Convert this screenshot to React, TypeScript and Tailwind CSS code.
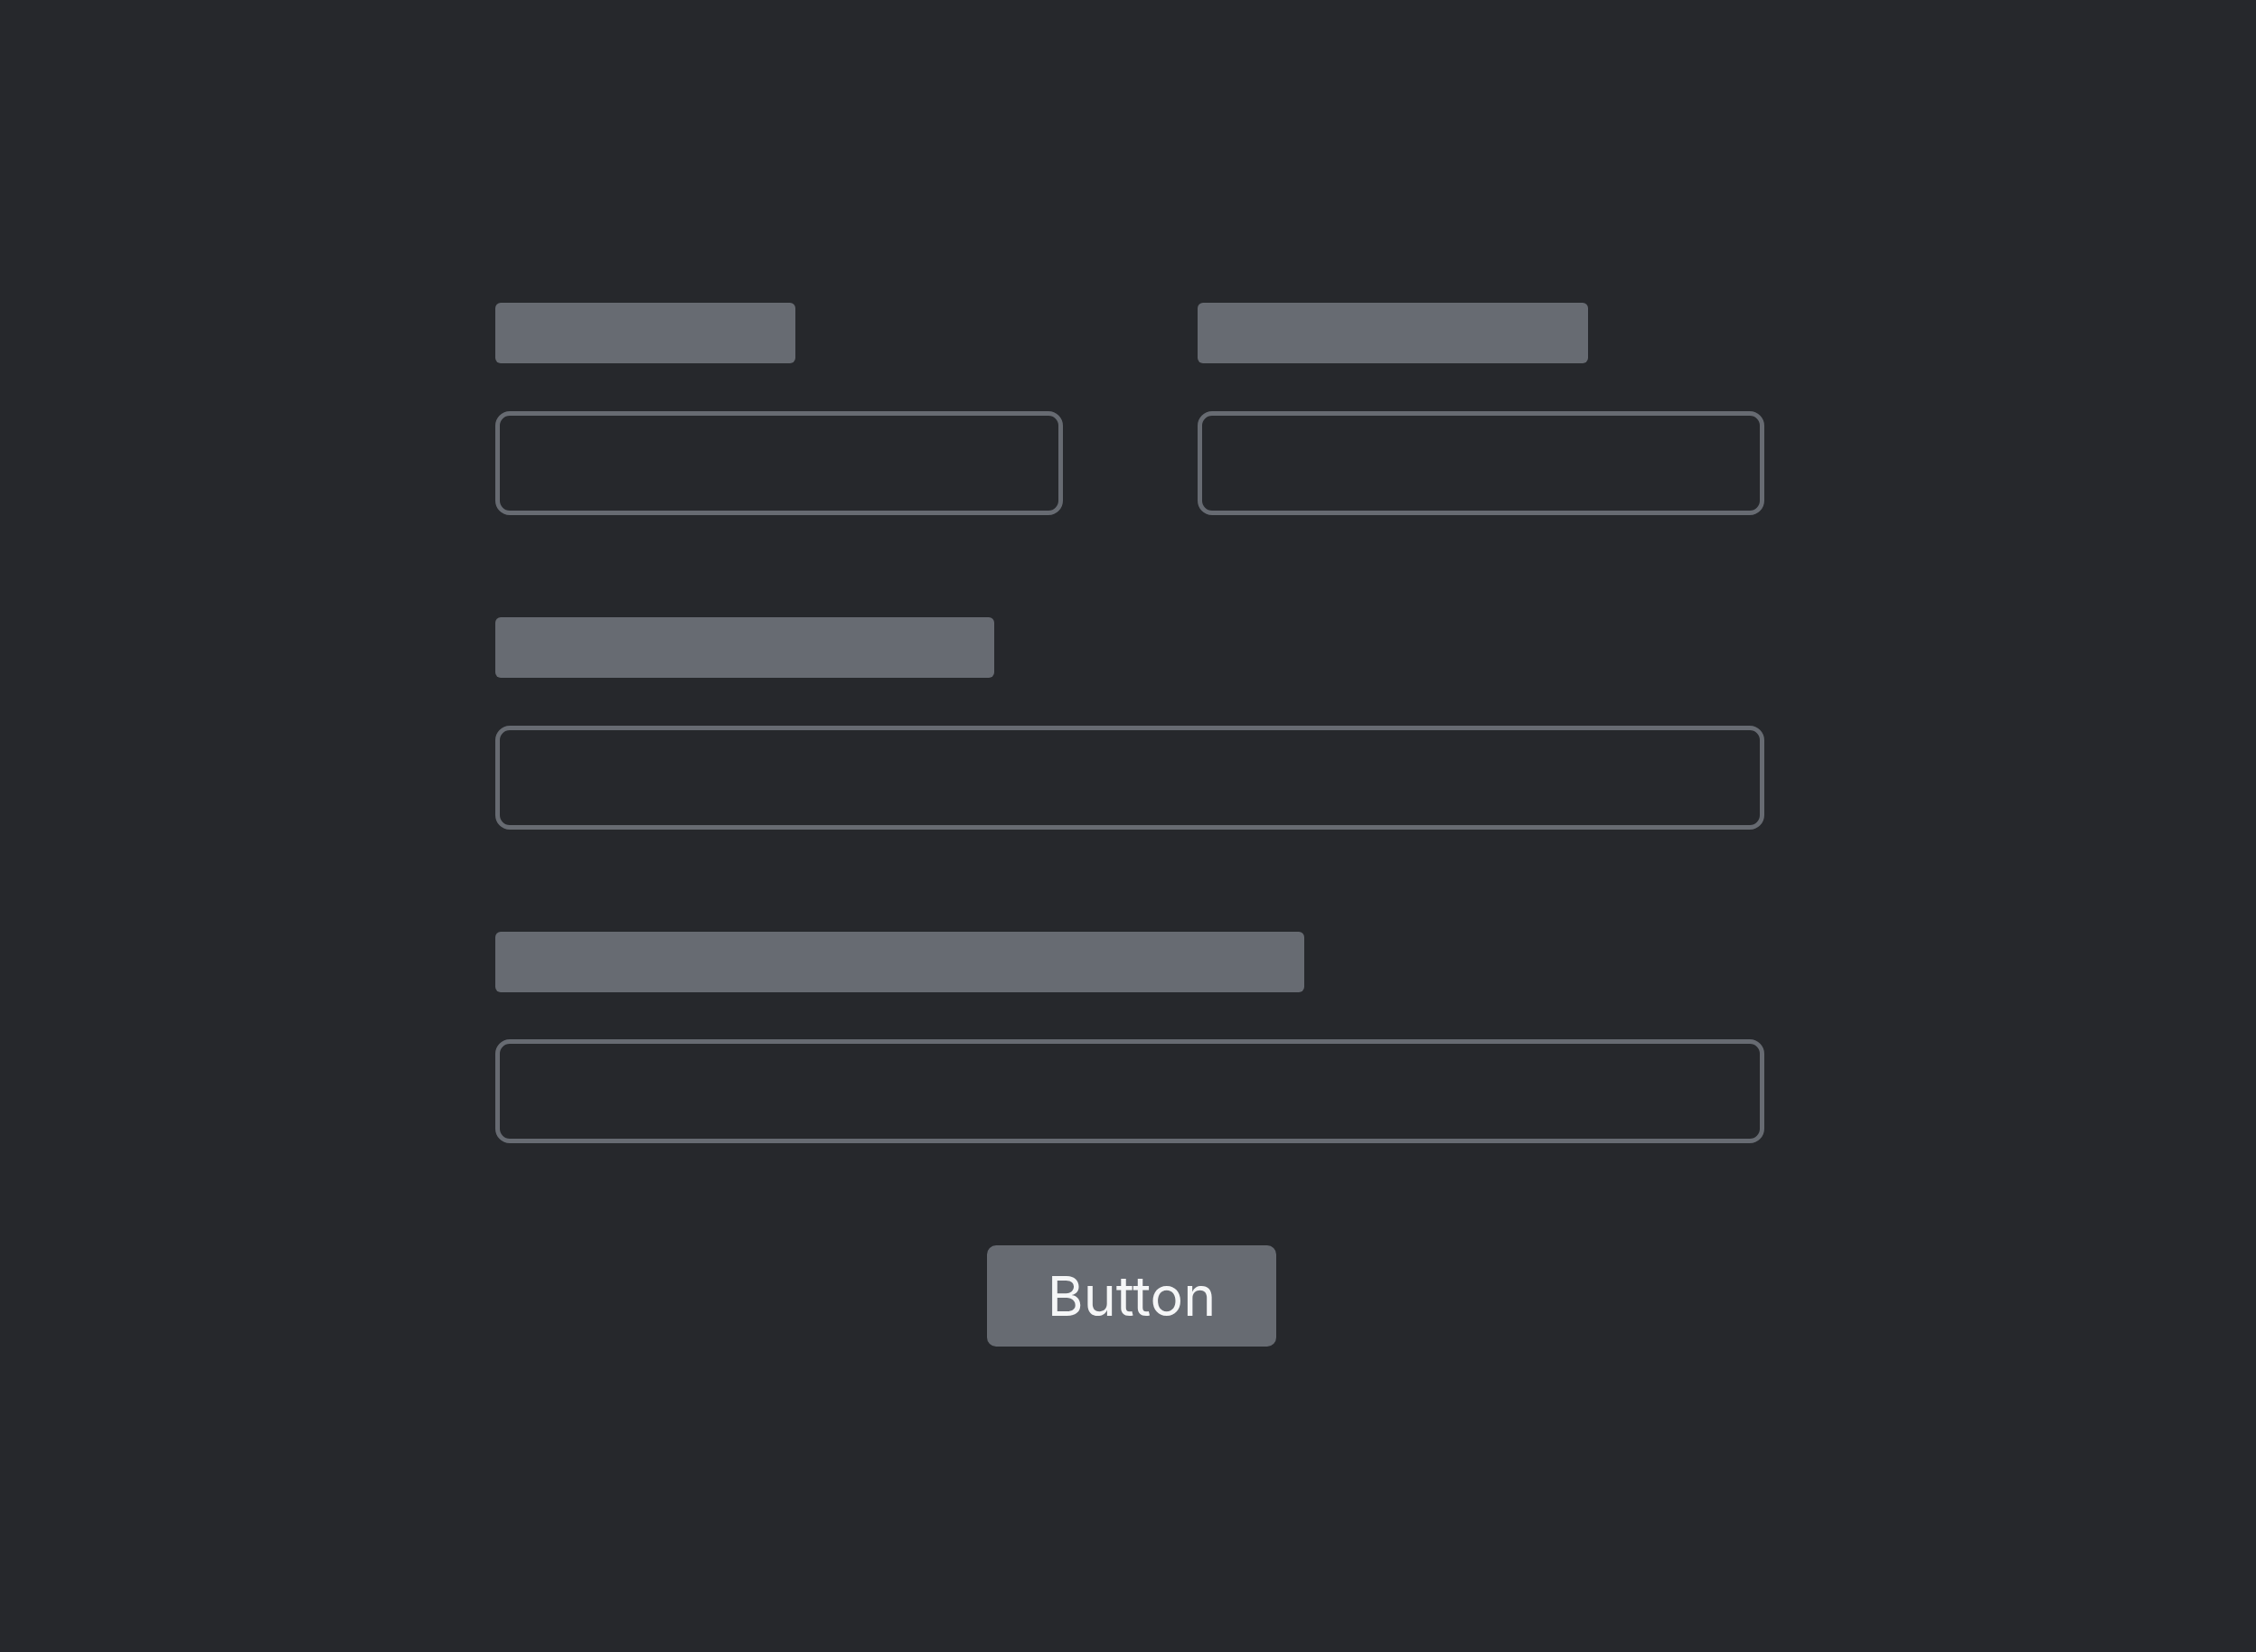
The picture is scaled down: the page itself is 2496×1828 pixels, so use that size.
const fieldLabel = 'h-[67px] rounded-[6px] bg-[#676b72]'
const fieldInput =
  'block h-[115px] w-full rounded-[16px] border-[5px] border-[#676b72] bg-transparent outline-none'

export default function App() {
  return (
    <div className="flex h-screen w-full items-center justify-center bg-[#26282c] pb-[3px] pl-[4px] font-['Inter',sans-serif]">
      <form className="flex w-[1404px] flex-col" onSubmit={(e) => e.preventDefault()}>
        {/* Two-up row */}
        <div className="grid grid-cols-2 gap-x-[149px]">
          <div>
            <div className={`${fieldLabel} w-[332px]`} />
            <input className={`${fieldInput} mt-[53px]`} />
          </div>
          <div>
            <div className={`${fieldLabel} w-[432px]`} />
            <input className={`${fieldInput} mt-[53px]`} />
          </div>
        </div>

        {/* Full width fields */}
        <div className="mt-[113px]">
          <div className={`${fieldLabel} w-[552px]`} />
          <input className={`${fieldInput} mt-[53px]`} />
        </div>

        <div className="mt-[113px]">
          <div className={`${fieldLabel} w-[895px]`} />
          <input className={`${fieldInput} mt-[52px]`} />
        </div>

        <div className="mt-[113px] flex justify-center pl-[4px]">
          <button
            type="submit"
            className="flex h-[112px] w-[320px] items-center justify-center rounded-[10px] bg-[#676b72] text-[61px] leading-none font-normal text-[#f5f6f7]"
          >
            Button
          </button>
        </div>
      </form>
    </div>
  )
}
